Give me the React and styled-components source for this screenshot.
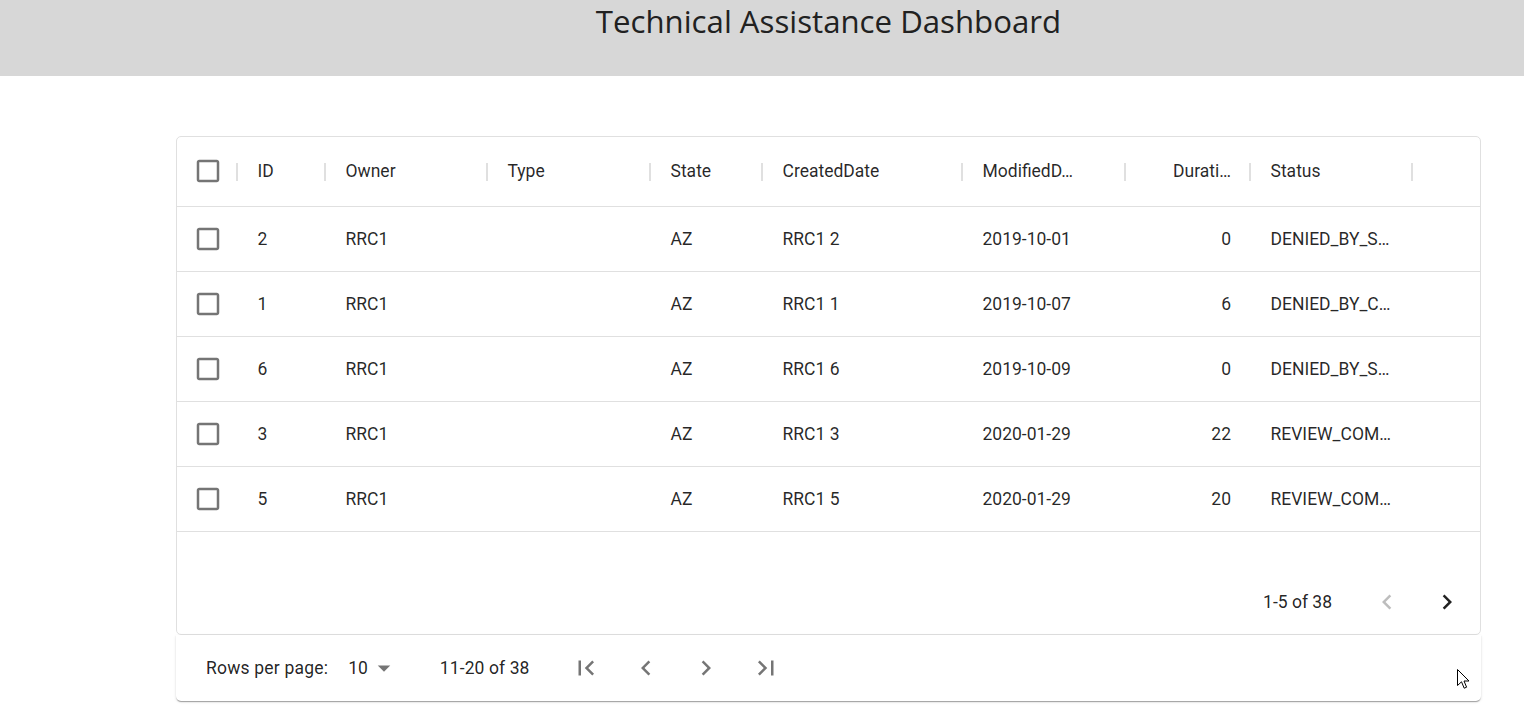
import React from "react";
import styled, { createGlobalStyle } from "styled-components";

const GlobalStyle = createGlobalStyle`
  html, body {
    margin: 0;
    padding: 0;
    background: #fff;
  }
  body {
    font-family: Roboto, "Liberation Sans", Arial, sans-serif;
    color: rgba(0, 0, 0, 0.87);
  }
`;

const Page = styled.div`
  position: relative;
  width: 1524px;
  min-height: 709px;
`;

const Header = styled.header`
  height: 76px;
  background: #d7d7d7;
`;

const HeaderInner = styled.div`
  margin: 0 43px 0 176px;
  text-align: center;
`;

const Title = styled.h1`
  margin: 0;
  padding-top: 1px;
  font-family: "Open Sans", "Liberation Sans", sans-serif;
  font-weight: 400;
  font-size: 31.2px;
  line-height: 40px;
  color: #212121;
`;

const Main = styled.main`
  margin: 60px 43px 0 176px;
`;

const Grid = styled.div`
  display: flex;
  flex-direction: column;
  height: 499px;
  border: 1px solid #e0e0e0;
  border-radius: 5px;
  box-sizing: border-box;
  font-size: 17.5px;
`;

const COLS = "61px 88px 162px 163px 112px 200px 163px 125px 162px 1fr";

const HeadRow = styled.div`
  display: grid;
  grid-template-columns: ${COLS};
  height: 68px;
  padding-bottom: 1px;
  border-bottom: 1px solid #e0e0e0;
`;

const Row = styled.div`
  display: grid;
  grid-template-columns: ${COLS};
  height: 64px;
  border-bottom: 1px solid #e0e0e0;
`;

const Cell = styled.div`
  position: relative;
  display: flex;
  align-items: center;
  justify-content: ${(p) => (p.$right ? "flex-end" : "flex-start")};
  padding: ${(p) => (p.$check ? "0" : "0 20px 0 19.5px")};
  ${(p) => p.$check && "justify-content: center;"}
  white-space: nowrap;
  overflow: hidden;
  color: rgba(0, 0, 0, 0.85);
`;

const HeadCell = styled(Cell)`
  &::after {
    content: "";
    display: ${(p) => (p.$noSep ? "none" : "block")};
    position: absolute;
    right: 0;
    top: 26px;
    width: 2px;
    height: 18px;
    background: #e0e0e0;
  }
`;

const Spacer = styled.div`
  flex: 1;
`;

const GridFooter = styled.div`
  display: flex;
  align-items: center;
  justify-content: flex-end;
  height: 65px;
  padding-right: 3px;
  font-size: 17.5px;
`;

const Caption = styled.span`
  color: rgba(0, 0, 0, 0.87);
  margin-right: ${(p) => p.$mr || 0}px;
  letter-spacing: ${(p) => (p.$wide ? "0.1px" : "normal")};
`;

const IconButton = styled.button`
  display: flex;
  align-items: center;
  justify-content: center;
  width: 60px;
  height: 60px;
  padding: 0;
  border: 0;
  background: none;
  color: ${(p) => (p.$disabled ? "rgba(0,0,0,0.26)" : p.$dark ? "rgba(0,0,0,0.87)" : "rgba(0,0,0,0.54)")};
`;

const Pager = styled.div`
  display: flex;
  align-items: center;
  height: 66px;
  padding-left: 30px;
  border-radius: 0 0 5px 5px;
  box-shadow: 0 2px 1px -1px rgba(0, 0, 0, 0.2), 0 1px 1px 0 rgba(0, 0, 0, 0.14),
    0 1px 3px 0 rgba(0, 0, 0, 0.12);
  font-size: 17.5px;
`;

const RowsLabel = styled.span`
  color: rgba(0, 0, 0, 0.87);
  letter-spacing: 0.2px;
`;

const Select = styled.div`
  display: flex;
  align-items: center;
  margin-left: 20px;
  margin-right: 41px;
  color: rgba(0, 0, 0, 0.87);
  svg {
    margin-left: 1px;
    color: rgba(0, 0, 0, 0.54);
  }
`;

const Cursor = styled.svg`
  position: absolute;
  left: 1457px;
  top: 669px;
`;

const Icon = ({ d, size = 30 }) => (
  <svg width={size} height={size} viewBox="0 0 24 24" fill="currentColor">
    <path d={d} />
  </svg>
);

const P = {
  box: "M19 5v14H5V5h14m0-2H5c-1.11 0-2 .9-2 2v14c0 1.1.89 2 2 2h14c1.1 0 2-.9 2-2V5c0-1.1-.9-2-2-2z",
  left: "M15.41 16.59L10.83 12l4.58-4.59L14 6l-6 6 6 6 1.41-1.41z",
  right: "M8.59 16.59L13.17 12 8.59 7.41 10 6l6 6-6 6-1.41-1.41z",
  first: "M18.41 16.59L13.82 12l4.59-4.59L17 6l-6 6 6 6zM6 6h2v12H6z",
  last: "M5.59 7.41L10.18 12l-4.59 4.59L7 18l6-6-6-6zM16 6h2v12h-2z",
  drop: "M7 10l5 5 5-5z",
};

const Check = styled.span`
  display: flex;
  color: rgba(0, 0, 0, 0.54);
`;

const rows = [
  { id: 2, owner: "RRC1", state: "AZ", created: "RRC1 2", modified: "2019-10-01", duration: 0, status: "DENIED_BY_S…" },
  { id: 1, owner: "RRC1", state: "AZ", created: "RRC1 1", modified: "2019-10-07", duration: 6, status: "DENIED_BY_C…" },
  { id: 6, owner: "RRC1", state: "AZ", created: "RRC1 6", modified: "2019-10-09", duration: 0, status: "DENIED_BY_S…" },
  { id: 3, owner: "RRC1", state: "AZ", created: "RRC1 3", modified: "2020-01-29", duration: 22, status: "REVIEW_COM…" },
  { id: 5, owner: "RRC1", state: "AZ", created: "RRC1 5", modified: "2020-01-29", duration: 20, status: "REVIEW_COM…" },
];

export default function App() {
  return (
    <Page>
      <GlobalStyle />
      <Header>
        <HeaderInner>
          <Title>Technical Assistance Dashboard</Title>
        </HeaderInner>
      </Header>
      <Main>
        <Grid>
          <HeadRow>
            <HeadCell $check>
              <Check><Icon d={P.box} /></Check>
            </HeadCell>
            <HeadCell>ID</HeadCell>
            <HeadCell>Owner</HeadCell>
            <HeadCell>Type</HeadCell>
            <HeadCell>State</HeadCell>
            <HeadCell>CreatedDate</HeadCell>
            <HeadCell>ModifiedD…</HeadCell>
            <HeadCell $right>Durati…</HeadCell>
            <HeadCell>Status</HeadCell>
            <HeadCell $noSep />
          </HeadRow>
          {rows.map((r) => (
            <Row key={r.id}>
              <Cell $check>
                <Check><Icon d={P.box} /></Check>
              </Cell>
              <Cell>{r.id}</Cell>
              <Cell>{r.owner}</Cell>
              <Cell />
              <Cell>{r.state}</Cell>
              <Cell>{r.created}</Cell>
              <Cell>{r.modified}</Cell>
              <Cell $right>{r.duration}</Cell>
              <Cell>{r.status}</Cell>
              <Cell />
            </Row>
          ))}
          <Spacer />
          <GridFooter>
            <Caption $mr={25}>1-5 of 38</Caption>
            <IconButton $disabled>
              <Icon d={P.left} />
            </IconButton>
            <IconButton $dark>
              <Icon d={P.right} />
            </IconButton>
          </GridFooter>
        </Grid>
        <Pager>
          <RowsLabel>Rows per page:</RowsLabel>
          <Select>
            10
            <Icon d={P.drop} />
          </Select>
          <Caption $mr={26} $wide>11-20 of 38</Caption>
          <IconButton>
            <Icon d={P.first} />
          </IconButton>
          <IconButton>
            <Icon d={P.left} />
          </IconButton>
          <IconButton>
            <Icon d={P.right} />
          </IconButton>
          <IconButton>
            <Icon d={P.last} />
          </IconButton>
        </Pager>
      </Main>
      <Cursor width="13" height="21" viewBox="0 0 13 21">
        <path
          d="M0.5 0.5 L0.5 16.5 L4.5 12.8 L7.2 19.2 L9.6 18.2 L7 12 L12 12 Z"
          fill="#fff"
          stroke="#000"
          strokeWidth="1"
          strokeLinejoin="round"
        />
      </Cursor>
    </Page>
  );
}
